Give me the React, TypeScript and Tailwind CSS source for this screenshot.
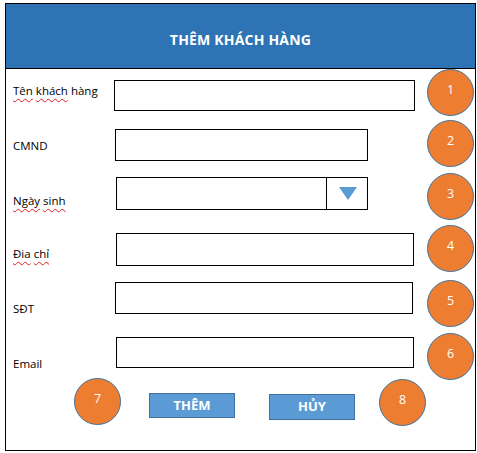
const font = { fontFamily: '"Open Sans", "Noto Sans", sans-serif' };

type Row = {
  label: React.ReactNode;
  n: number;
  h: string;
  labelCol: string;
  labelMt: string;
  inputMt: string;
  inputW: string;
  inputH: string;
  dropdown?: boolean;
};

function Squiggle({ children }: { children: React.ReactNode }) {
  return (
    <span className="underline decoration-wavy decoration-[#e02020] decoration-1 underline-offset-[3px]">
      {children}
    </span>
  );
}

const rows: Row[] = [
  {
    label: (
      <>
        <Squiggle>Tên</Squiggle> <Squiggle>khách</Squiggle> hàng
      </>
    ),
    n: 1,
    h: "h-[51px]",
    labelCol: "w-[108px]",
    labelMt: "mt-[15px]",
    inputMt: "mt-[11px]",
    inputW: "w-[301px]",
    inputH: "h-[31px]",
  },
  {
    label: "CMND",
    n: 2,
    h: "h-[53px]",
    labelCol: "w-[109px]",
    labelMt: "mt-[19px]",
    inputMt: "mt-[9px]",
    inputW: "w-[253px]",
    inputH: "h-[32px]",
  },
  {
    label: (
      <>
        <Squiggle>Ngày</Squiggle> <Squiggle>sinh</Squiggle>
      </>
    ),
    n: 3,
    h: "h-[52px]",
    labelCol: "w-[110px]",
    labelMt: "mt-[21px]",
    inputMt: "mt-[4px]",
    inputW: "w-[252px]",
    inputH: "h-[33px]",
    dropdown: true,
  },
  {
    label: (
      <>
        <Squiggle>Đia</Squiggle> <Squiggle>chỉ</Squiggle>
      </>
    ),
    n: 4,
    h: "h-[55px]",
    labelCol: "w-[110px]",
    labelMt: "mt-[22px]",
    inputMt: "mt-[8px]",
    inputW: "w-[298px]",
    inputH: "h-[33px]",
  },
  {
    label: "SĐT",
    n: 5,
    h: "h-[53px]",
    labelCol: "w-[109px]",
    labelMt: "mt-[22px]",
    inputMt: "mt-[2px]",
    inputW: "w-[298px]",
    inputH: "h-[32px]",
  },
  {
    label: "Email",
    n: 6,
    h: "h-[45px]",
    labelCol: "w-[110px]",
    labelMt: "mt-[24px]",
    inputMt: "mt-[4px]",
    inputW: "w-[298px]",
    inputH: "h-[31px]",
  },
];

function Badge({ n, className = "" }: { n: number; className?: string }) {
  return (
    <div
      className={`flex h-[47px] w-[47px] shrink-0 items-center justify-center rounded-full border border-[#41719c] bg-[#ed7d31] pb-[5px] text-[12.5px] font-medium text-white ${className}`}
    >
      {n}
    </div>
  );
}

function Arrow() {
  return (
    <svg width="18" height="13" viewBox="0 0 18 13">
      <polygon points="0,0 18,0 9,13" fill="#5b9bd5" />
    </svg>
  );
}

export default function App() {
  return (
    <div className="h-[453px] w-[477px] bg-white pl-[5px] pt-[3px]" style={font}>
      <div className="flex h-[448px] w-[471px] flex-col border border-black">
        <div className="flex h-[65px] shrink-0 items-center justify-center border-b border-black bg-[#2e74b5] pt-[6px]">
          <span className="text-[14px] font-bold tracking-[0.2px] text-white">THÊM KHÁCH HÀNG</span>
        </div>

        {rows.map((r) => (
          <div key={r.n} className={`flex items-start ${r.h}`}>
            <div className={`shrink-0 pl-[7px] text-[11.5px] leading-[14px] text-black ${r.labelCol} ${r.labelMt}`}>
              {r.label}
            </div>
            <div className={`flex shrink-0 border border-black ${r.inputMt} ${r.inputW} ${r.inputH}`}>
              {r.dropdown && (
                <>
                  <div className="flex-1" />
                  <div className="flex w-[41px] items-center justify-center border-l border-black pl-[1px]">
                    <Arrow />
                  </div>
                </>
              )}
            </div>
            <Badge n={r.n} className="ml-auto mr-[1px]" />
          </div>
        ))}

        <div className="flex items-start">
          <Badge n={7} className="ml-[68px]" />
          <div className="ml-[28px] mt-[15px] flex h-[25px] w-[86px] items-center justify-center border border-[#41719c] bg-[#5b9bd5] text-[13px] font-bold text-white">
            THÊM
          </div>
          <div className="ml-[34px] mt-[16px] flex h-[26px] w-[86px] items-center justify-center border border-[#41719c] bg-[#5b9bd5] text-[13px] font-bold text-white">
            HỦY
          </div>
          <Badge n={8} className="ml-[24px] mt-[1px]" />
        </div>
      </div>
    </div>
  );
}
